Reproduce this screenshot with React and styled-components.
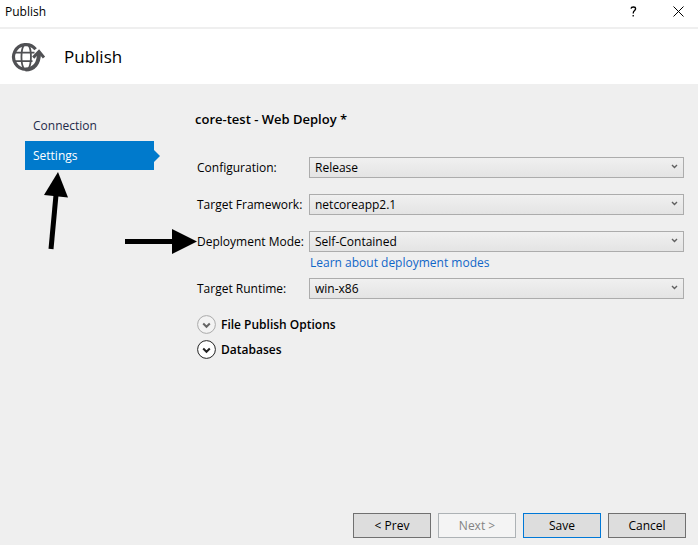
import React, { useState } from "react";
import styled, { createGlobalStyle, css } from "styled-components";

const GlobalStyle = createGlobalStyle`
  *, *::before, *::after { box-sizing: border-box; }
  body {
    margin: 0;
    background: #efefef;
    color: #000;
    font: 12px/16px "Open Sans", "Segoe UI", sans-serif;
  }
  button, select { font: inherit; color: inherit; }
`;

const Dialog = styled.div`
  display: flex;
  flex-direction: column;
  min-height: 100vh;
`;

const TitleBar = styled.div`
  display: flex;
  align-items: center;
  height: 27px;
  padding: 0 14px 4px 5px;
  background: #fff;
`;

const Caption = styled.span`
  flex: 1;
`;

const CaptionButton = styled.button`
  display: grid;
  place-items: center;
  width: 12px;
  height: 20px;
  margin-left: ${(p) => (p.$spaced ? "33px" : "0")};
  padding: 0;
  border: 0;
  background: none;
`;

const Header = styled.header`
  display: flex;
  align-items: center;
  gap: 19px;
  height: 57px;
  padding: 0 11px;
  border-top: 2px solid #efefef;
  background: #fff;
`;

const Heading = styled.h1`
  margin: 0;
  font-size: 17px;
  line-height: 24px;
  font-weight: 400;
`;

const Body = styled.div`
  display: flex;
  flex: 1;
  gap: 41px;
  padding: 26px 14px 24px 25px;
`;

const Nav = styled.nav`
  position: relative;
  display: flex;
  flex-direction: column;
  flex: none;
  width: 129px;
`;

const NavItem = styled.a`
  position: relative;
  display: flex;
  align-items: center;
  height: 31px;
  padding: 0 8px;
  color: #1e2a4a;
  text-decoration: none;
  ${(p) =>
    p.$active &&
    css`
      height: 29px;
      background: #007acc;
      color: #fff;
      &::after {
        content: "";
        position: absolute;
        left: 100%;
        top: 9px;
        border: 6px solid transparent;
        border-left-color: #007acc;
        border-right-width: 0;
      }
    `}
`;

const PointerUp = styled.svg`
  position: absolute;
  left: 18px;
  top: 62px;
`;

const PointerRight = styled.svg`
  position: absolute;
  right: 100%;
  top: -3px;
`;

const Main = styled.main`
  flex: 1;
  min-width: 0;
`;

const ProfileName = styled.h2`
  margin: 0 0 29px;
  font-size: 13px;
  line-height: 18px;
  font-weight: 600;
`;

const Form = styled.form`
  display: flex;
  flex-direction: column;
  gap: 16px;
  padding-left: 2px;
`;

const Field = styled.div`
  display: grid;
  grid-template-columns: 112px 1fr;
  align-items: center;
`;

const Label = styled.label`
  position: relative;
  line-height: 21px;
  white-space: nowrap;
`;

const SelectBox = styled.div`
  display: grid;
  align-items: center;
  > * { grid-area: 1 / 1; }
  > svg { justify-self: end; margin: 0 6px 2px 0; pointer-events: none; }
`;

const Select = styled.select`
  width: 100%;
  height: 21px;
  padding: 0 20px 0 5px;
  border: 1px solid #acacac;
  border-radius: 0;
  background: linear-gradient(#f0f0f0, #e4e4e4);
  appearance: none;
`;

const LearnLink = styled.a`
  grid-column: 2;
  justify-self: start;
  margin: 3px 0 -9px 1px;
  line-height: 16px;
  color: #0f66c8;
  text-decoration: none;
`;

const Expanders = styled.div`
  display: flex;
  flex-direction: column;
  align-items: flex-start;
  gap: 6px;
  margin: 16px 0 0 2px;
`;

const Expander = styled.button`
  display: flex;
  align-items: center;
  gap: 5px;
  height: 19px;
  padding: 0;
  border: 0;
  background: none;
  font-weight: 600;
`;

const Footer = styled.footer`
  display: flex;
  justify-content: flex-end;
  gap: 7px;
  padding: 0 12px 7px;
`;

const tones = {
  normal: ["#707070", "#dddddd", "#000"],
  primary: ["#0078d7", "#dddddd", "#000"],
  disabled: ["#adb2b5", "#f4f4f4", "#838383"],
};

const Button = styled.button`
  width: 78px;
  height: 25px;
  padding: 0;
  border: 1px solid ${(p) => tones[p.$tone][0]};
  background: ${(p) => tones[p.$tone][1]};
  color: ${(p) => tones[p.$tone][2]};
`;

function GlobeIcon() {
  return (
    <svg width="34" height="30" viewBox="0 0 34 30" fill="none" stroke="#505154" aria-hidden="true">
      <path d="M24.6 7.2A12.4 12.4 0 1 0 15 27.4" strokeWidth="3.2" />
      <path d="M3.5 10.6H23.5M3.5 19.2H21.5M13 3C9.6 8 9.6 22 13 27M17.4 3C20.8 8 20.8 21 17.4 27" strokeWidth="1.8" />
      <path d="M14.5 27.4C23 27.4 28 21.5 28 11" strokeWidth="4" />
      <path d="M22.2 15.6L28 9.6L33 15.6" strokeWidth="3" />
    </svg>
  );
}

function Chevron() {
  return (
    <svg width="7" height="5" viewBox="0 0 7 5" fill="none" stroke="#606060" aria-hidden="true">
      <path d="M1 1L3.5 3.5L6 1" strokeWidth="1.4" />
    </svg>
  );
}

function ExpanderIcon({ muted }) {
  return (
    <svg width="19" height="19" viewBox="0 0 19 19" fill="none" aria-hidden="true">
      <circle cx="9.5" cy="9.5" r="8.9" fill={muted ? "#f3f3f3" : "#fff"} stroke={muted ? "#aaa" : "#222"} />
      <path d="M6.2 8.5L9.5 11.8L12.8 8.5" stroke={muted ? "#666" : "#222"} strokeWidth="2" />
    </svg>
  );
}

function Dropdown({ id, label, options, children, marker }) {
  const [value, setValue] = useState(options[0]);
  return (
    <Field>
      <Label htmlFor={id}>
        {label}
        {marker}
      </Label>
      <SelectBox>
        <Select id={id} value={value} onChange={(e) => setValue(e.target.value)}>
          {options.map((o) => (
            <option key={o}>{o}</option>
          ))}
        </Select>
        <Chevron />
      </SelectBox>
      {children}
    </Field>
  );
}

export default function App() {
  return (
    <Dialog>
      <GlobalStyle />
      <TitleBar>
        <Caption>Publish</Caption>
        <CaptionButton aria-label="Help">
          <svg width="7" height="11" viewBox="0 0 7 11" fill="none" stroke="#000" aria-hidden="true">
            <path d="M1 2.6C1.2 .5 5.6 .3 5.6 2.8C5.6 4.7 3.2 4.6 3.2 7.4M3.2 9V10.6" strokeWidth="1.3" />
          </svg>
        </CaptionButton>
        <CaptionButton aria-label="Close" $spaced>
          <svg width="11" height="11" viewBox="0 0 11 11" stroke="#000" aria-hidden="true">
            <path d="M.5 .5L10.5 10.5M10.5 .5L.5 10.5" />
          </svg>
        </CaptionButton>
      </TitleBar>
      <Header>
        <GlobeIcon />
        <Heading>Publish</Heading>
      </Header>
      <Body>
        <Nav>
          <NavItem href="#connection">Connection</NavItem>
          <NavItem href="#settings" $active aria-current="page">
            Settings
          </NavItem>
          <PointerUp width="27" height="78" viewBox="0 0 27 78" aria-hidden="true">
            <path d="M13 23L8 77" stroke="#000" strokeWidth="5" />
            <path d="M15 0L1 23L25 25.5Z" />
          </PointerUp>
        </Nav>
        <Main>
          <ProfileName>core-test - Web Deploy *</ProfileName>
          <Form>
            <Dropdown id="configuration" label="Configuration:" options={["Release", "Debug"]} />
            <Dropdown id="framework" label="Target Framework:" options={["netcoreapp2.1"]} />
            <Dropdown
              id="mode"
              label="Deployment Mode:"
              options={["Self-Contained", "Framework-Dependent"]}
              marker={
                <PointerRight width="72" height="26" viewBox="0 0 72 26" aria-hidden="true">
                  <path d="M0 13.5H50" stroke="#000" strokeWidth="5" />
                  <path d="M47 1L72 13.5L47 26Z" />
                </PointerRight>
              }
            >
              <LearnLink href="#deployment-modes">Learn about deployment modes</LearnLink>
            </Dropdown>
            <Dropdown id="runtime" label="Target Runtime:" options={["win-x86", "win-x64"]} />
          </Form>
          <Expanders>
            <Expander aria-expanded="false">
              <ExpanderIcon muted />
              File Publish Options
            </Expander>
            <Expander aria-expanded="false">
              <ExpanderIcon />
              Databases
            </Expander>
          </Expanders>
        </Main>
      </Body>
      <Footer>
        <Button $tone="normal">&lt; Prev</Button>
        <Button $tone="disabled" disabled>
          Next &gt;
        </Button>
        <Button $tone="primary">Save</Button>
        <Button $tone="normal">Cancel</Button>
      </Footer>
    </Dialog>
  );
}
